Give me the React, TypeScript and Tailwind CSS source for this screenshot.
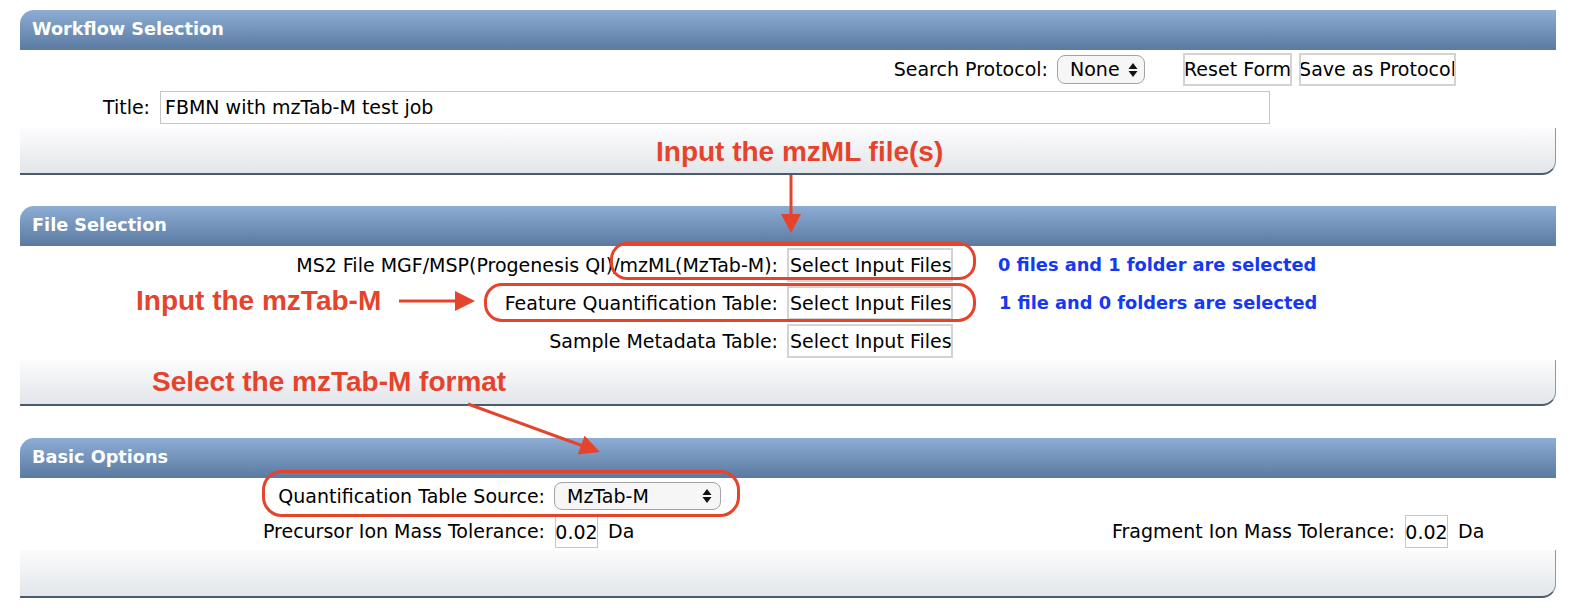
import React from "react";

const RED = "#e5432b";

function Header({ title }: { title: string }) {
  return (
    <div className="h-[40px] flex items-center pl-[12px] rounded-tl-[14px] bg-gradient-to-b from-[#8dadd5] to-[#5a7aa1]">
      <span className="text-white font-bold text-[17.7px] leading-none">{title}</span>
    </div>
  );
}

function Footer({ h }: { h: string }) {
  return (
    <div
      className={`${h} bg-gradient-to-b from-[#fcfcfd] to-[#e2e6ea] border-b-2 border-r-[1.5px] border-b-[#4a5b6e] border-r-[#8a97a6] rounded-br-[14px]`}
    />
  );
}

function UpDown() {
  return (
    <svg width="10" height="16" viewBox="0 0 10 16" className="shrink-0">
      <polygon points="5,1 9.5,7 0.5,7" fill="#111" />
      <polygon points="0.5,9 9.5,9 5,15" fill="#111" />
    </svg>
  );
}

function FileBtn() {
  return (
    <div className="h-[34px] w-[166px] border-2 border-[#d3d3d3] flex items-center pl-[1px] whitespace-nowrap">
      Select Input Files
    </div>
  );
}

export default function App() {
  return (
    <div
      className="relative w-[1572px] h-[616px] bg-white text-black text-[19px] leading-none overflow-hidden pt-[10px] pl-[20px] pr-[16px]"
      style={{ fontFamily: '"DejaVu Sans", Verdana, sans-serif' }}
    >
      {/* Workflow Selection */}
      <div>
        <Header title="Workflow Selection" />
        <div className="h-[78px] pt-[3px]">
          <div className="flex items-center justify-end mr-[100px] h-[33px]">
            <span className="whitespace-nowrap">Search Protocol:</span>
            <div className="ml-[9px] h-[29px] w-[88px] rounded-[8px] border border-[#a3a3a3] bg-[#f6f6f6] flex items-center pl-[12px] pr-[6px] justify-between">
              <span>None</span>
              <UpDown />
            </div>
            <div className="ml-[38px] h-[33px] w-[109px] border-2 border-[#d3d3d3] flex items-center justify-center whitespace-nowrap overflow-hidden">
              Reset Form
            </div>
            <div className="ml-[7px] h-[33px] w-[157px] border-2 border-[#d3d3d3] flex items-center justify-center whitespace-nowrap overflow-hidden">
              Save as Protocol
            </div>
          </div>
          <div className="flex items-center mt-[5px] h-[33px]">
            <span className="w-[130px] text-right">Title:</span>
            <div className="ml-[10px] h-[33px] w-[1110px] border border-[#c6c6c6] flex items-center pl-[4px]">
              FBMN with mzTab-M test job
            </div>
          </div>
        </div>
        <Footer h="h-[47px]" />
      </div>

      {/* File Selection */}
      <div className="mt-[31px]">
        <Header title="File Selection" />
        <div className="h-[114px] pt-[2px] flex flex-col gap-[4px]">
          <div className="flex items-center h-[34px]">
            <span className="w-[758px] text-right whitespace-nowrap">
              MS2 File MGF/MSP(Progenesis QI)/mzML(MzTab-M):
            </span>
            <div className="ml-[9px]">
              <FileBtn />
            </div>
            <span className="ml-[45px] text-[#1538f0] font-bold text-[17.8px] whitespace-nowrap">
              0 files and 1 folder are selected
            </span>
          </div>
          <div className="flex items-center h-[34px]">
            <span className="w-[758px] text-right whitespace-nowrap">
              Feature Quantification Table:
            </span>
            <div className="ml-[9px]">
              <FileBtn />
            </div>
            <span className="ml-[46px] text-[#1538f0] font-bold text-[17.8px] whitespace-nowrap">
              1 file and 0 folders are selected
            </span>
          </div>
          <div className="flex items-center h-[34px]">
            <span className="w-[758px] text-right whitespace-nowrap">
              Sample Metadata Table:
            </span>
            <div className="ml-[9px]">
              <FileBtn />
            </div>
          </div>
        </div>
        <Footer h="h-[46px]" />
      </div>

      {/* Basic Options */}
      <div className="mt-[32px]">
        <Header title="Basic Options" />
        <div className="h-[72px] pt-[3px]">
          <div className="flex items-center h-[30px]">
            <span className="w-[525px] text-right whitespace-nowrap">
              Quantification Table Source:
            </span>
            <div className="ml-[9px] h-[28px] w-[167px] rounded-[8px] border border-[#a3a3a3] bg-[#f6f6f6] flex items-center pl-[12px] pr-[8px] justify-between">
              <span>MzTab-M</span>
              <UpDown />
            </div>
          </div>
          <div className="flex items-center h-[33px] mt-[4px]">
            <span className="w-[525px] text-right whitespace-nowrap">
              Precursor Ion Mass Tolerance:
            </span>
            <div className="ml-[10px] h-[33px] w-[43px] border border-[#c6c6c6] flex items-center justify-center pt-[2px]">
              0.02
            </div>
            <span className="ml-[10px]">Da</span>
            <span className="flex-1 text-right whitespace-nowrap">
              Fragment Ion Mass Tolerance:
            </span>
            <div className="ml-[10px] h-[33px] w-[43px] border border-[#c6c6c6] flex items-center justify-center pt-[2px]">
              0.02
            </div>
            <span className="w-[108px] pl-[10px]">Da</span>
          </div>
        </div>
        <Footer h="h-[48px]" />
      </div>

      {/* Annotations */}
      <div className="absolute left-[610px] top-[242px] w-[366px] h-[38px] border-[3px] border-[#e5432b] rounded-[17px]" />
      <div className="absolute left-[484px] top-[283px] w-[492px] h-[39px] border-[3px] border-[#e5432b] rounded-[18px]" />
      <div className="absolute left-[262px] top-[470px] w-[478px] h-[47px] border-[3px] border-[#e5432b] rounded-[20px]" />

      <div
        className="absolute left-[656px] top-[138px] text-[28px] leading-none font-bold text-[#e5432b] whitespace-nowrap"
        style={{ fontFamily: '"Liberation Sans", Arial, sans-serif' }}
      >
        Input the mzML file(s)
      </div>
      <div
        className="absolute left-[136px] top-[287px] text-[28px] leading-none font-bold text-[#e5432b] whitespace-nowrap"
        style={{ fontFamily: '"Liberation Sans", Arial, sans-serif' }}
      >
        Input the mzTab-M
      </div>
      <div
        className="absolute left-[152px] top-[368px] text-[28px] leading-none font-bold text-[#e5432b] whitespace-nowrap"
        style={{ fontFamily: '"Liberation Sans", Arial, sans-serif' }}
      >
        Select the mzTab-M format
      </div>

      <svg
        className="absolute left-0 top-0 pointer-events-none"
        width="1572"
        height="616"
        viewBox="0 0 1572 616"
      >
        <line x1="791" y1="175" x2="791" y2="216" stroke={RED} strokeWidth="3" />
        <polygon points="781,214 801,214 791,233" fill={RED} />
        <line x1="399" y1="301" x2="457" y2="301" stroke={RED} strokeWidth="3" />
        <polygon points="455,291 455,311 475,301" fill={RED} />
        <line x1="468" y1="404" x2="583" y2="446" stroke={RED} strokeWidth="3" />
        <polygon points="584.6,435.8 577.8,454.6 600,452" fill={RED} />
      </svg>
    </div>
  );
}
